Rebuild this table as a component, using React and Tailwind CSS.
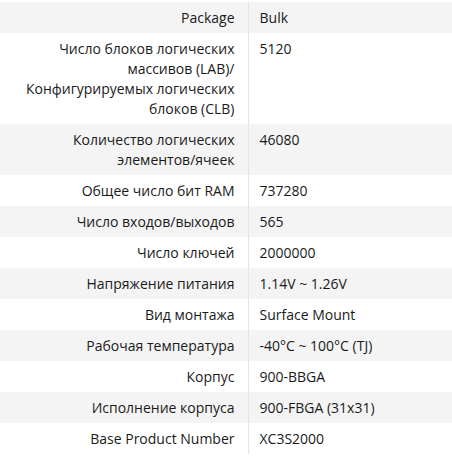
const rows = [
  ['Package', 'Bulk'],
  ['Число блоков логических массивов (LAB)/ Конфигурируемых логических блоков (CLB)', '5120'],
  ['Количество логических элементов/ячеек', '46080'],
  ['Общее число бит RAM', '737280'],
  ['Число входов/выходов', '565'],
  ['Число ключей', '2000000'],
  ['Напряжение питания', '1.14V ~ 1.26V'],
  ['Вид монтажа', 'Surface Mount'],
  ['Рабочая температура', '-40°C ~ 100°C (TJ)'],
  ['Корпус', '900-BBGA'],
  ['Исполнение корпуса', '900-FBGA (31x31)'],
  ['Base Product Number', 'XC3S2000'],
]

export default function App() {
  return (
    <div className="bg-white pt-[2px] text-[14px] leading-[20px] text-[#1a1a1a]"
         style={{ fontFamily: '"Open Sans", "Noto Sans", sans-serif' }}>
      <table className="w-full border-collapse">
        <tbody>
          {rows.map(([name, value], i) => (
            <tr key={name} className={i % 2 === 0 ? 'bg-[#f4f4f4]' : 'bg-white'}>
              <td className="w-[248px] border-r border-[#e4e4e4] pl-3 pr-[13px] pt-[6px] pb-[5px] text-right align-top">
                {name}
              </td>
              <td className="pl-[11px] pr-3 pt-[6px] pb-[5px] align-top">{value}</td>
            </tr>
          ))}
        </tbody>
      </table>
    </div>
  )
}
